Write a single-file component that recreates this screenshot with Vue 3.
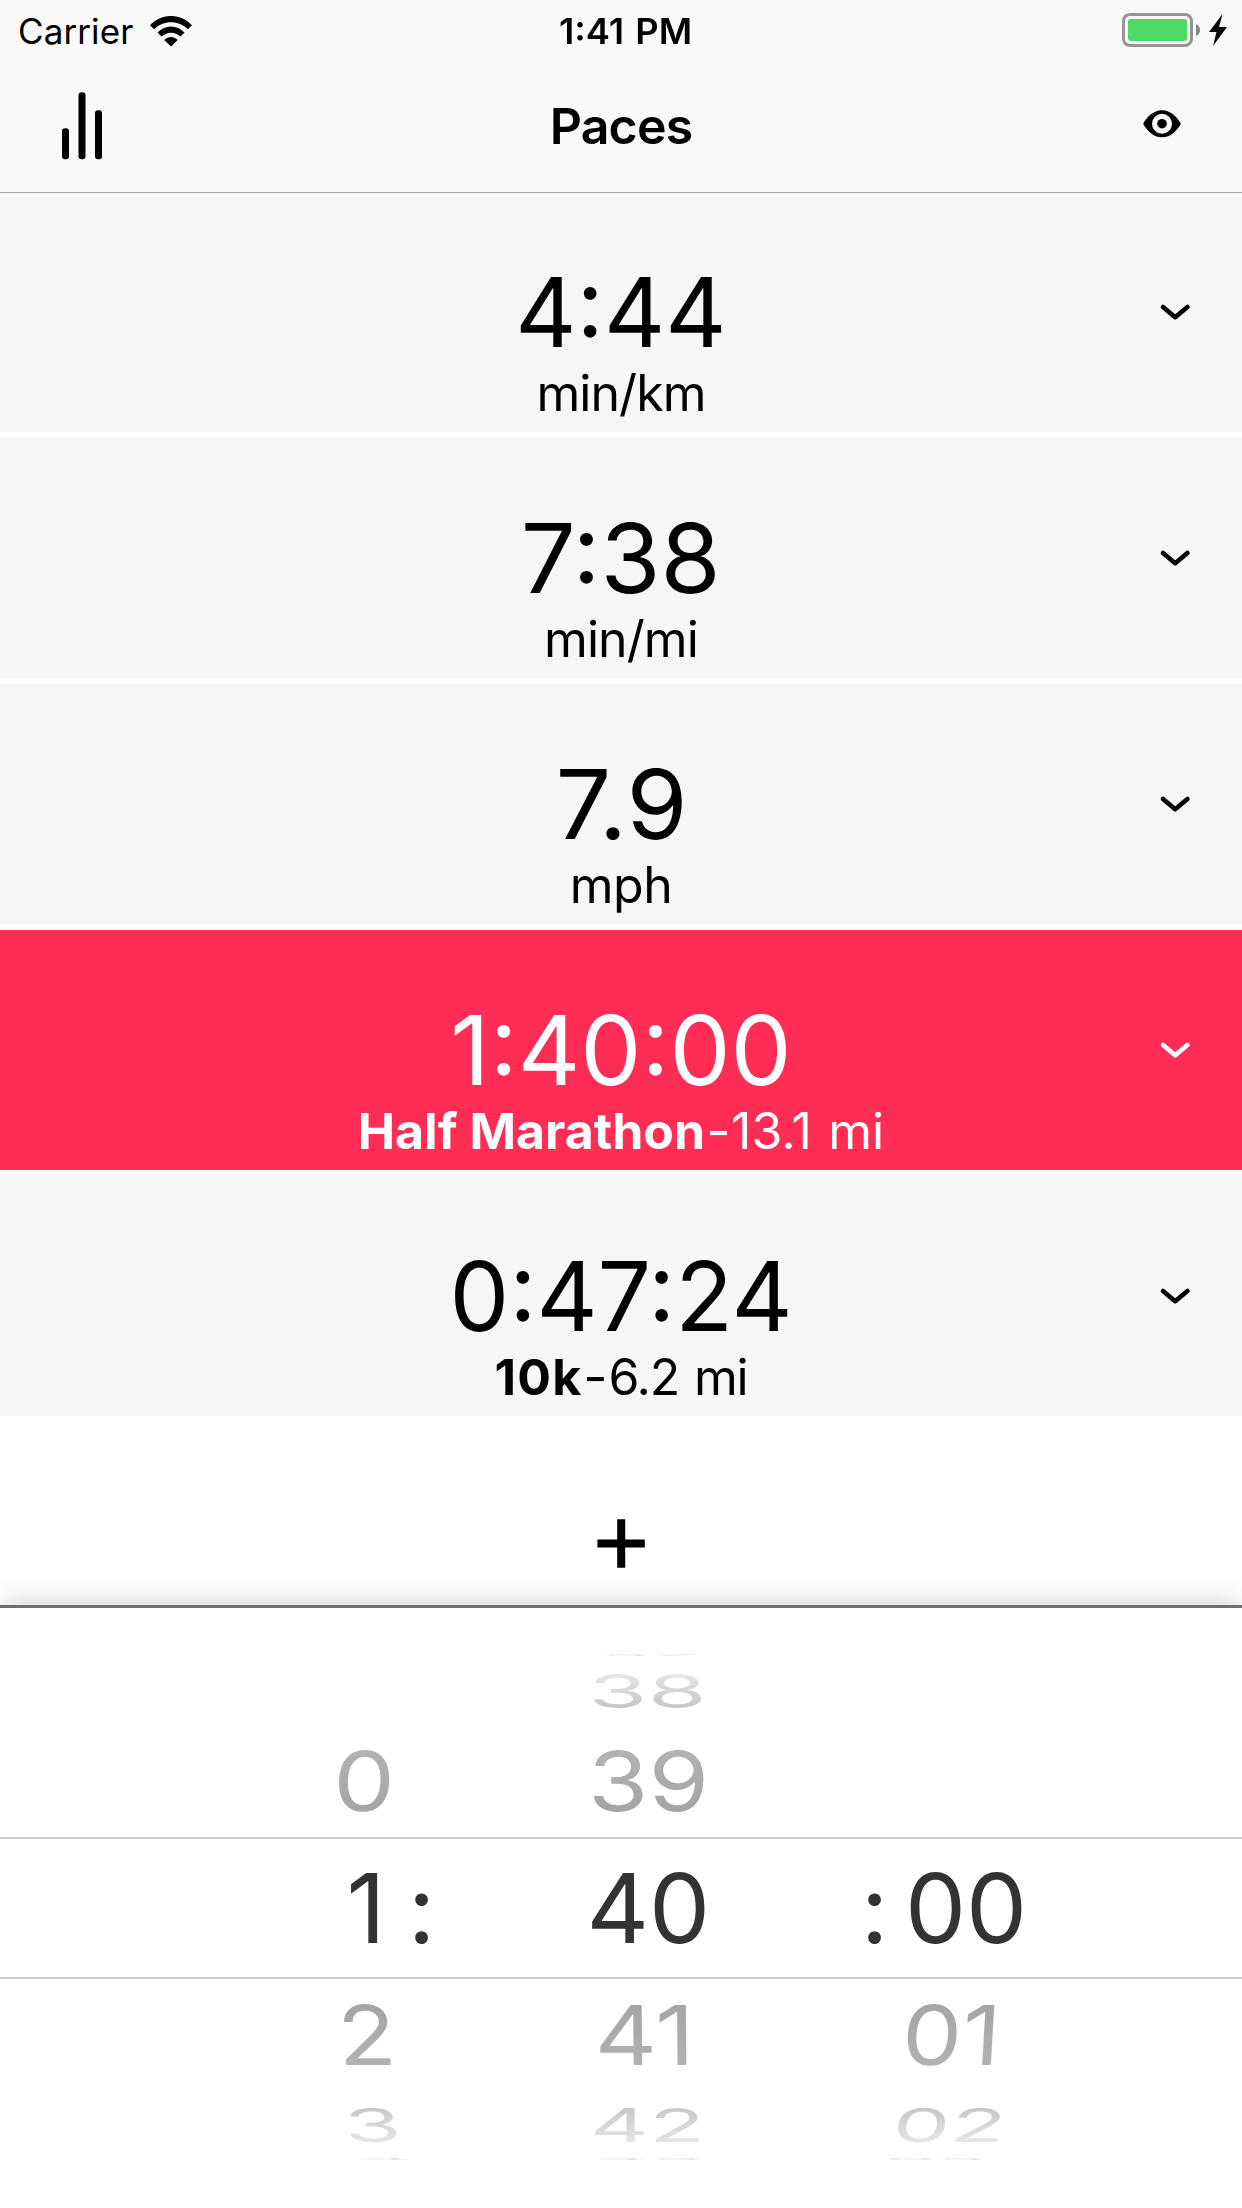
<script setup>
const paces = [
  { value: '4:44', unit: 'min/km', stretch: 0.988, unitTracking: -0.95 },
  { value: '7:38', unit: 'min/mi', stretch: 1.012, unitTracking: -0.9 },
  { value: '7.9', unit: 'mph', stretch: 1.025, unitTracking: -0.5 },
  { value: '1:40:00', name: 'Half Marathon', unit: '13.1 mi', active: true, stretch: 1.01, unitTracking: 0.1 },
  { value: '0:47:24', name: '10k', unit: '6.2 mi', stretch: 0.986, unitTracking: -1.2, nameTracking: 1.2 },
]

const spaced = (px) => ({ letterSpacing: `${px ?? 0}px` })
const stretched = (x) => ({ transform: `scaleX(${x})` })

// Each wheel lists its seven slots from top to bottom; x is the slot's centre.
const wheels = [
  {
    key: 'hours',
    items: [
      null,
      null,
      { text: '0', x: 364, sx: 1.02, skew: -2 },
      { text: '1', x: 366, sx: 1, skew: 0 },
      { text: '2', x: 366.5, sx: 1, skew: 2.9 },
      { text: '3', x: 373, sx: 0.97, skew: 4.5 },
      { text: '4', x: 385, sx: 0.9, skew: 0 },
    ],
  },
  {
    key: 'minutes',
    items: [
      { text: '37', x: 649, sx: 0.88, skew: 0 },
      { text: '38', x: 647.5, sx: 1, skew: 0 },
      { text: '39', x: 648.2, sx: 1.02, skew: 0 },
      { text: '40', x: 648, sx: 1.01, skew: 0 },
      { text: '41', x: 645, sx: 1.01, skew: 0.5 },
      { text: '42', x: 647, sx: 0.96, skew: 0 },
      { text: '43', x: 649, sx: 0.9, skew: 0 },
    ],
  },
  {
    key: 'seconds',
    items: [
      null,
      null,
      null,
      { text: '00', x: 966.5, sx: 1.01, skew: 0 },
      { text: '01', x: 951.8, sx: 0.99, skew: -3.4 },
      { text: '02', x: 950, sx: 0.95, skew: -8 },
      { text: '03', x: 935, sx: 0.86, skew: 0 },
    ],
  },
]
const slots = ['edge', 'far', 'near', 'current', 'near', 'far', 'edge']
const squash = { edge: 0.025, far: 0.485, near: 0.86, current: 1 }

const place = (item, slot) => ({
  transform: `translateX(${item.x - 621}px) skewX(${item.skew}deg) scale(${item.sx}, ${squash[slot]})`,
})
</script>

<template>
  <div class="screen">
    <header class="nav">
      <div class="status">
        <div class="status-left">
          <span class="carrier">Carrier</span>
          <svg class="wifi" width="42" height="31" viewBox="0 0 42 31">
            <path d="M0 9.2C12-3.1 30-3.1 42 9.2L38 13.2C28.400 3.800 13.600 3.800 4 13.200Z" />
            <path d="M7.500 16.600C15.200 8.600 26.800 8.600 34.500 16.600L30.500 20.600C25.100 15.300 16.900 15.300 11.500 20.600Z" />
            <path d="M14.300 23.900C18.100 20 23.900 20 27.700 23.900L21 30.400Z" />
          </svg>
        </div>
        <span class="clock">1:41 PM</span>
        <div class="status-right">
          <span class="battery"><span class="charge"></span></span>
          <svg class="nub" width="4" height="12" viewBox="0 0 4 12"><path d="M0 0Q4 2 4 6T0 12Z" /></svg>
          <svg class="bolt" width="18" height="32" viewBox="0 0 18 32">
            <path d="M13.500 0L0 18H7.500L4 32L18 13H10Z" />
          </svg>
        </div>
      </div>
      <div class="title-bar">
        <svg class="bars" width="42" height="68" viewBox="0 0 42 68">
          <rect x="1" y="36.300" width="7" height="31" rx="3" />
          <rect x="17.500" y="0.300" width="7" height="67" rx="3" />
          <rect x="34" y="18.300" width="7" height="49" rx="3" />
        </svg>
        <h1>Paces</h1>
        <svg class="eye" width="38" height="28" viewBox="0 0 38 28">
          <path
            fill-rule="evenodd"
            d="M19 .2C28 .2 33.500 7 36.800 11.700Q38.400 13.700 36.800 15.700C33.500 20.500 28 27.200 19 27.200S4.500 20.500 1.200 15.700Q-.4 13.700 1.200 11.700C4.500 7 10 .2 19 .2ZM19 3.700A10 10 0 1 0 19 23.700A10 10 0 1 0 19 3.700Z"
          />
          <circle cx="19" cy="13.700" r="4.800" />
        </svg>
      </div>
    </header>

    <main class="list">
      <section v-for="p in paces" :key="p.value" class="row" :class="{ active: p.active }">
        <div class="value" :style="stretched(p.stretch)">{{ p.value }}</div>
        <div class="unit"><b v-if="p.name" :style="spaced(p.nameTracking)">{{ p.name }}</b><span v-if="p.name" class="dash">-</span><span :style="spaced(p.unitTracking)">{{ p.unit }}</span></div>
        <svg class="chevron" width="32" height="18" viewBox="0 0 32 18">
          <path d="M4 4L16.200 14.200L28.400 4" />
        </svg>
      </section>
      <div class="add">
        <svg width="48" height="50" viewBox="0 0 48 50">
          <path d="M20.200 .3H28.200V20.500H47.800V28.500H28.200V48.700H20.200V28.500H.4V20.500H20.200Z" />
        </svg>
      </div>
    </main>

    <footer class="picker">
      <div class="drum">
        <div v-for="(slot, i) in slots" :key="i" class="slot" :class="[slot, i < 3 ? 'above' : 'below']">
          <template v-for="w in wheels" :key="w.key">
            <span v-if="w.items[i]" class="digit" :style="place(w.items[i], slot)">{{ w.items[i].text }}</span>
          </template>
          <template v-if="slot === 'current'">
            <span class="digit colon-first">:</span>
            <span class="digit colon-second">:</span>
          </template>
        </div>
      </div>
    </footer>
  </div>
</template>

<style>
body {
  margin: 0;
  background: #fff;
}
</style>

<style scoped>
.screen {
  width: 1242px;
  height: 2208px;
  display: flex;
  flex-direction: column;
  overflow: hidden;
  background: #fff;
  color: #000;
  font-family: Inter, "Liberation Sans", sans-serif;
}
.nav {
  box-sizing: border-box;
  height: 193px;
  flex: none;
  background: #f9f9f9;
  border-bottom: 1px solid #a7a7a7;
}
.status {
  height: 62px;
  display: grid;
  grid-template-columns: 1fr auto 1fr;
  align-items: center;
  font-size: 35px;
  line-height: 62px;
}
.status-left {
  display: flex;
  align-items: center;
  padding-left: 18px;
}
.carrier {
  letter-spacing: 0.1px;
}
.wifi {
  margin-left: 17px;
}
.clock {
  font-weight: 600;
  word-spacing: 2px;
  padding-left: 9px;
  transform: scaleX(1.035);
}
.status-right {
  display: flex;
  align-items: center;
  justify-content: flex-end;
  padding-right: 15px;
  height: 60px;
  align-self: start;
}
.battery {
  box-sizing: border-box;
  width: 71px;
  height: 34px;
  padding: 3px;
  border: 3px solid #959595;
  border-radius: 8px;
  display: flex;
}
.charge {
  flex: 1;
  border-radius: 3px;
  background: #4cdb64;
}
.nub {
  margin-left: 3px;
  fill: #858585;
}
.bolt {
  margin-left: 9px;
}
.title-bar {
  height: 130px;
  display: grid;
  grid-template-columns: 1fr auto 1fr;
  align-items: start;
}
.bars {
  margin: 29.700px 0 0 61.300px;
}
h1 {
  margin: 34px 0 0;
  font-size: 50px;
  line-height: 60px;
  font-weight: 600;
  letter-spacing: -0.8px;
}
.eye {
  justify-self: end;
  margin: 48px 61px 0 0;
}
.list {
  flex: none;
  height: 1412px;
  display: flex;
  flex-direction: column;
  gap: 6px;
}
.row {
  position: relative;
  box-sizing: border-box;
  height: 240px;
  flex: none;
  padding-top: 60px;
  display: flex;
  flex-direction: column;
  align-items: center;
  background: #f6f6f6;
}
.row:first-child {
  height: 239px;
  padding-top: 59px;
}
.row.active {
  background: #ff2d55;
  color: #fff;
}
.value {
  font-size: 96px;
  line-height: 120px;
}
.unit {
  margin-top: -6px;
  font-size: 50px;
  line-height: 54px;
  white-space: pre;
  word-spacing: 2px;
}
.unit b {
  font-weight: 700;
  word-spacing: 0;
}
.dash {
  display: inline-block;
  transform: scaleX(1.06);
  margin: 0 1px 0 2px;
}
.chevron {
  position: absolute;
  right: 51px;
  bottom: 111px;
  fill: none;
  stroke: currentColor;
  stroke-width: 4.600;
  stroke-linecap: round;
  stroke-linejoin: round;
}
.add {
  display: flex;
  justify-content: center;
  padding-top: 97px;
}
.picker {
  position: relative;
  flex: 1;
  box-sizing: border-box;
  border-top: 3px solid #6f6f6f;
  background: #fff;
  box-shadow: 0 0 30px rgba(0, 0, 0, 0.2);
}
.drum {
  padding-top: 46px;
}
.slot {
  display: grid;
  justify-items: center;
  align-items: center;
  box-sizing: border-box;
}
.edge {
  height: 3px;
}
.far {
  height: 69px;
}
.near {
  height: 111px;
}
.current {
  height: 142px;
  border-top: 2px solid #cacaca;
  border-bottom: 2px solid #cacaca;
  color: #333;
}
.digit {
  grid-area: 1 / 1;
  font-size: 96px;
  line-height: 116px;
  margin: -58px 0;
}
.near .digit,
.far .digit {
  color: transparent;
  background-clip: text;
  -webkit-background-clip: text;
}
.above .digit {
  position: relative;
  top: -1px;
}
.near.above .digit {
  background-image: linear-gradient(#b2b2b2 20%, #a5a5a5 80%);
}
.near.below .digit {
  background-image: linear-gradient(#a5a5a5 20%, #b2b2b2 80%);
}
.far.above .digit {
  background-image: linear-gradient(#e6e6e6 20%, #c6c6c6 80%);
}
.far.below .digit {
  background-image: linear-gradient(#c8c8c8 20%, #e5e5e5 80%);
}
.edge .digit {
  color: #e4e4e4;
}
.edge.below .digit {
  position: relative;
  top: -2px;
}
.colon-first {
  transform: translateX(-199.500px);
}
.colon-second {
  transform: translateX(253.500px);
}
</style>
